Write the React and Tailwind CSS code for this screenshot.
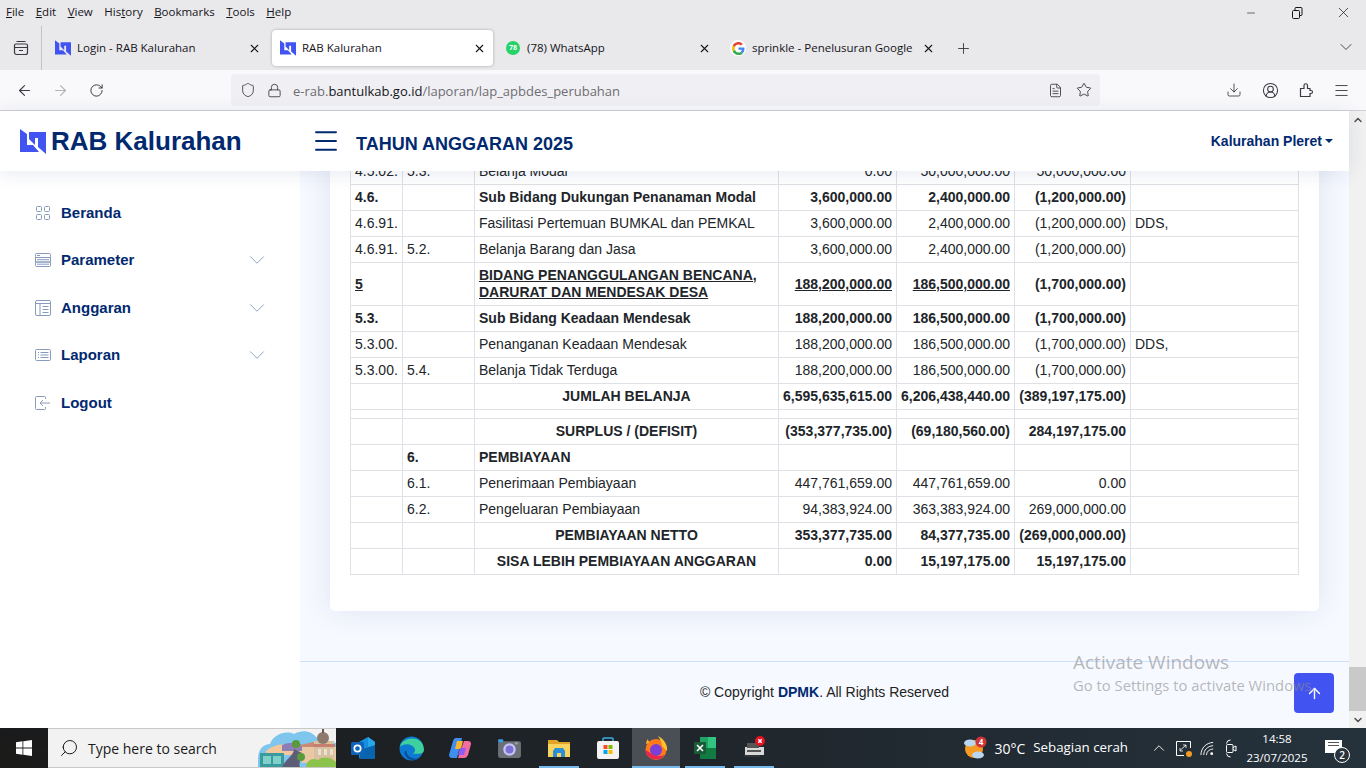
import { ArrowLeft, ArrowRight, RotateCw, Shield, Lock, Star, Download, CircleUserRound, Menu, X, Plus, ChevronDown, ChevronUp, ArrowUp, Minus, Search, FileText } from "lucide-react";

const NAVY = "text-[#012970]";

const rows = [
  { h: "h-[26px]", a: "4.5.02.", b: "5.3.", c: "Belanja Modal", d: "0.00", e: "50,000,000.00", f: "50,000,000.00" },
  { h: "h-[26px]", bold: true, a: "4.6.", c: "Sub Bidang Dukungan Penanaman Modal", d: "3,600,000.00", e: "2,400,000.00", f: "(1,200,000.00)" },
  { h: "h-[26px]", a: "4.6.91.", c: "Fasilitasi Pertemuan BUMKAL dan PEMKAL", d: "3,600,000.00", e: "2,400,000.00", f: "(1,200,000.00)", g: "DDS," },
  { h: "h-[26px]", a: "4.6.91.", b: "5.2.", c: "Belanja Barang dan Jasa", d: "3,600,000.00", e: "2,400,000.00", f: "(1,200,000.00)" },
  { h: "h-[43px]", bold: true, under: true, a: "5", c: "BIDANG PENANGGULANGAN BENCANA, DARURAT DAN MENDESAK DESA", d: "188,200,000.00", e: "186,500,000.00", f: "(1,700,000.00)" },
  { h: "h-[26px]", bold: true, a: "5.3.", c: "Sub Bidang Keadaan Mendesak", d: "188,200,000.00", e: "186,500,000.00", f: "(1,700,000.00)" },
  { h: "h-[26px]", a: "5.3.00.", c: "Penanganan Keadaan Mendesak", d: "188,200,000.00", e: "186,500,000.00", f: "(1,700,000.00)", g: "DDS," },
  { h: "h-[26px]", a: "5.3.00.", b: "5.4.", c: "Belanja Tidak Terduga", d: "188,200,000.00", e: "186,500,000.00", f: "(1,700,000.00)" },
  { h: "h-[26px]", bold: true, center: true, c: "JUMLAH BELANJA", d: "6,595,635,615.00", e: "6,206,438,440.00", f: "(389,197,175.00)" },
  { h: "h-[9px]", c: "" },
  { h: "h-[26px]", bold: true, center: true, c: "SURPLUS / (DEFISIT)", d: "(353,377,735.00)", e: "(69,180,560.00)", f: "284,197,175.00" },
  { h: "h-[26px]", bold: true, b: "6.", c: "PEMBIAYAAN" },
  { h: "h-[26px]", b: "6.1.", c: "Penerimaan Pembiayaan", d: "447,761,659.00", e: "447,761,659.00", f: "0.00" },
  { h: "h-[26px]", b: "6.2.", c: "Pengeluaran Pembiayaan", d: "94,383,924.00", e: "363,383,924.00", f: "269,000,000.00" },
  { h: "h-[26px]", bold: true, center: true, c: "PEMBIAYAAN NETTO", d: "353,377,735.00", e: "84,377,735.00", f: "(269,000,000.00)" },
  { h: "h-[26px]", bold: true, center: true, c: "SISA LEBIH PEMBIAYAAN ANGGARAN", d: "0.00", e: "15,197,175.00", f: "15,197,175.00" },
];

function Logo({ className }) {
  return (
    <svg viewBox="0 0 26 25" className={className}>
      <path fill="#4154f1" d="M0 0L7 5V16H13L19 23H0Z" />
      <path fill="#4154f1" d="M9 3H26V25L18 18V9H15V16L9 10Z" />
    </svg>
  );
}

function GoogleG() {
  return (
    <span className="w-[16px] h-[16px] rounded-full bg-white flex items-center justify-center">
      <svg viewBox="0 0 48 48" className="w-[13px] h-[13px]">
        <path fill="#EA4335" d="M24 9.5c3.5 0 6.6 1.2 9.1 3.6l6.8-6.8C35.8 2.5 30.4 0 24 0 14.6 0 6.5 5.4 2.6 13.2l7.9 6.2C12.4 13.7 17.7 9.5 24 9.5z" />
        <path fill="#4285F4" d="M46.1 24.5c0-1.6-.1-3.1-.4-4.5H24v9h12.4c-.5 2.9-2.2 5.3-4.6 7l7.3 5.6c4.3-4 7-9.9 7-17.1z" />
        <path fill="#FBBC05" d="M10.5 28.6c-.5-1.4-.8-3-.8-4.6s.3-3.2.8-4.6l-7.9-6.2C.9 16.5 0 20.1 0 24s.9 7.5 2.6 10.8l7.9-6.2z" />
        <path fill="#34A853" d="M24 48c6.5 0 11.9-2.1 15.9-5.8l-7.3-5.6c-2.2 1.5-5 2.3-8.6 2.3-6.3 0-11.6-4.2-13.5-9.9l-7.9 6.2C6.5 42.6 14.6 48 24 48z" />
      </svg>
    </span>
  );
}

function Tab({ icon, title, active, width }) {
  return (
    <div className={`flex items-center h-[36px] pl-[8px] pr-[7px] rounded-[4px] ${width} ${active ? "bg-white shadow-[0_0_3px_rgba(0,0,0,0.3)]" : ""}`}>
      <span className="w-[16px] h-[16px] shrink-0 flex items-center justify-center">{icon}</span>
      <span className="ml-[6px] text-[11.5px] text-[#15141a] flex-1 whitespace-nowrap overflow-hidden">{title}</span>
      <X size={13} strokeWidth={2} className="text-[#15141a] shrink-0" />
    </div>
  );
}

function Chrome() {
  const menu = [["F", "ile"], ["E", "dit"], ["V", "iew"], ["His", "tory", "t"], ["B", "ookmarks"], ["T", "ools"], ["H", "elp"]];
  return (
    <div className="bg-[#e9e9ec] font-['Open_Sans',sans-serif] shrink-0">
      <div className="h-[23px] flex items-center pl-[6px] text-[11.5px] text-[#15141a] gap-[11.5px]">
        {menu.map((m) => (
          <span key={m[0] + m[1]} className="whitespace-nowrap">
            {m.length === 3 ? (
              <>His<span className="underline">t</span>ory</>
            ) : (
              <><span className="underline">{m[0]}</span>{m[1]}</>
            )}
          </span>
        ))}
        <div className="ml-auto flex items-center text-[#15141a] mt-[2px]">
          <span className="w-[46px] flex justify-center"><Minus size={12} strokeWidth={1.2} /></span>
          <span className="w-[46px] flex justify-center">
            <svg viewBox="0 0 12 12" className="w-[12px] h-[12px]" fill="none" stroke="currentColor">
              <rect x="1.5" y="3.5" width="7" height="8" rx="1" />
              <path d="M4 3.5V1.5a1 1 0 0 1 1-1h5a1 1 0 0 1 1 1v6a1 1 0 0 1-1 1H8.5" />
            </svg>
          </span>
          <span className="w-[46px] flex justify-center"><X size={17} strokeWidth={1} /></span>
        </div>
      </div>
      <div className="h-[47px] flex items-center">
        <div className="w-[42px] h-[44px] flex items-center justify-center border-r border-[#c4c4c8] mt-[3px]">
          <svg viewBox="0 0 16 16" className="w-[16px] h-[16px] text-[#3a3a40]" fill="none" stroke="currentColor" strokeWidth="1.2">
            <path d="M3.5 1.5h9M1.5 5.5a1.5 1.5 0 0 1 1.5-1.5h10a1.5 1.5 0 0 1 1.5 1.5v7a2 2 0 0 1-2 2h-9a2 2 0 0 1-2-2zM1.5 7.5h13M6 10.5h4" />
          </svg>
        </div>
        <div className="flex items-center mt-[3px] pl-[5px]">
          <Tab width="w-[221px]" title="Login - RAB Kalurahan" icon={<Logo className="w-[16px] h-[16px]" />} />
          <div className="w-[4px]" />
          <Tab active width="w-[221px]" title="RAB Kalurahan" icon={<Logo className="w-[16px] h-[16px]" />} />
          <div className="w-[4px]" />
          <Tab width="w-[221px]" title="(78) WhatsApp" icon={
            <span className="w-[14px] h-[14px] rounded-full bg-[#25d366] text-white text-[7px] font-bold flex items-center justify-center">78</span>
          } />
          <div className="w-[4px]" />
          <Tab width="w-[220px]" title="sprinkle - Penelusuran Google" icon={<GoogleG />} />
          <Plus size={17} strokeWidth={1.3} className="ml-[13px] text-[#3a3a40]" />
        </div>
        <ChevronDown size={20} strokeWidth={1.1} className="ml-auto mr-[10px] text-[#3a3a40]" />
      </div>
      <div className="h-[40px] bg-[#f9f9fb] flex items-center border-b border-[#cfcfd8] box-content">
        <ArrowLeft size={17} strokeWidth={1.6} className="ml-[16px] text-[#3a3a40]" />
        <ArrowRight size={17} strokeWidth={1.6} className="ml-[19px] text-[#b4b4b8]" />
        <RotateCw size={15} strokeWidth={1.6} className="ml-[20px] text-[#3a3a40]" />
        <div className="ml-[127px] w-[869px] h-[32px] rounded-[4px] bg-[#f0f0f4] flex items-center pl-[9px] text-[13px]">
          <Shield size={16} strokeWidth={1.3} className="text-[#3a3a40]" />
          <Lock size={15} strokeWidth={1.4} className="ml-[11px] text-[#3a3a40]" />
          <span className="ml-[11px] mt-[3px] text-[#6d6d72] whitespace-nowrap">e-rab.<span className="text-[#15141a]">bantulkab.go.id</span>/laporan/lap_apbdes_perubahan</span>
          <FileText size={15} strokeWidth={1.4} className="ml-auto text-[#3a3a40]" />
          <Star size={16} strokeWidth={1.4} className="ml-[13px] mr-[8px] text-[#3a3a40]" />
        </div>
        <Download size={16} strokeWidth={1.3} className="ml-[126px] text-[#3a3a40]" />
        <CircleUserRound size={17} strokeWidth={1.5} className="ml-[20px] text-[#3a3a40]" />
        <svg viewBox="0 0 16 16" className="ml-[19px] w-[16px] h-[16px] text-[#3a3a40]" fill="none" stroke="currentColor" strokeWidth="1.2">
          <path d="M2.5 14.5V6.5H6V3.5a1.75 1.75 0 0 1 3.5 0V6.5h2.5v2h1a1.5 1.5 0 0 1 0 3h-1v3z" />
        </svg>
        <Menu size={17} strokeWidth={1.3} className="ml-[19px] text-[#3a3a40]" />
      </div>
    </div>
  );
}

function SiteHeader() {
  return (
    <div className="h-[60px] bg-white flex items-center shrink-0 relative z-10 shadow-[0_2px_20px_rgba(1,41,112,0.1)] font-['Liberation_Sans',sans-serif]">
      <div className="w-[311px] flex items-center pl-[20px]">
        <Logo className="w-[26px] h-[25px]" />
        <span className={`ml-[5px] text-[26px] font-bold ${NAVY} whitespace-nowrap`}>RAB Kalurahan</span>
      </div>
      <Menu size={30} strokeWidth={1.5} className={NAVY} />
      <span className={`ml-[15px] text-[18px] font-bold ${NAVY} whitespace-nowrap mt-[6px]`}>TAHUN ANGGARAN 2025</span>
      <div className={`ml-auto mr-[16px] text-[14px] font-bold ${NAVY} flex items-center whitespace-nowrap`}>
        Kalurahan Pleret
        <span className="ml-[3px] -mt-[1px] border-x-[4px] border-x-transparent border-t-[4px] border-t-[#012970]" />
      </div>
    </div>
  );
}

function SideIcon({ name }) {
  const cls = "w-[16px] h-[16px] text-[#899bbd]";
  if (name === "grid") return (
    <svg viewBox="0 0 16 16" className={cls} fill="none" stroke="currentColor" strokeWidth="1">
      <rect x="1.5" y="1.5" width="5" height="5" rx="1" /><rect x="9.5" y="1.5" width="5" height="5" rx="1" /><rect x="1.5" y="9.5" width="5" height="5" rx="1" /><rect x="9.5" y="9.5" width="5" height="5" rx="1" />
    </svg>
  );
  if (name === "param") return (
    <svg viewBox="0 0 16 16" className={cls} fill="none" stroke="currentColor" strokeWidth="1">
      <rect x="0.5" y="1.5" width="15" height="4" rx="1" /><rect x="0.5" y="5.5" width="15" height="4.5" /><rect x="0.5" y="10" width="15" height="4.5" rx="1" /><path d="M2 3.5h3M2 7.7h12M2 12.2h12" />
    </svg>
  );
  if (name === "ang") return (
    <svg viewBox="0 0 16 16" className={cls} fill="none" stroke="currentColor" strokeWidth="1">
      <rect x="0.5" y="0.5" width="15" height="15" rx="1.5" /><path d="M0.5 3.5h15M5 3.5v12M7.5 6.5h6M7.5 9.5h6M7.5 12.5h6" />
    </svg>
  );
  if (name === "lap") return (
    <svg viewBox="0 0 16 16" className={cls} fill="none" stroke="currentColor" strokeWidth="1">
      <rect x="0.5" y="2.5" width="15" height="11" rx="1" /><path d="M3 5.5h1M5.5 5.5h8M3 8h1M5.5 8h8M3 10.5h1M5.5 10.5h8" />
    </svg>
  );
  return (
    <svg viewBox="0 0 16 16" className={cls} fill="none" stroke="currentColor" strokeWidth="1">
      <path d="M10.5 4V2.5a1 1 0 0 0-1-1h-8a1 1 0 0 0-1 1v11a1 1 0 0 0 1 1h8a1 1 0 0 0 1-1V12M15 8H5M8 5L5 8l3 3" />
    </svg>
  );
}

function Sidebar() {
  const items = [
    ["grid", "Beranda", false],
    ["param", "Parameter", true],
    ["ang", "Anggaran", true],
    ["lap", "Laporan", true],
    ["out", "Logout", false],
  ];
  return (
    <aside className="w-[300px] shrink-0 bg-white pt-[18px] shadow-[0_0_20px_rgba(1,41,112,0.1)] relative font-['Liberation_Sans',sans-serif]">
      {items.map(([icon, label, chevron]) => (
        <div key={label} className="h-[47.5px] flex items-center pl-[35px] pr-[30px]">
          <SideIcon name={icon} />
          <span className={`ml-[10px] text-[15px] font-bold ${NAVY}`}>{label}</span>
          {chevron && <ChevronDown size={26} strokeWidth={0.8} className="ml-auto text-[#7f93bb]" />}
        </div>
      ))}
    </aside>
  );
}

function Cell({ className = "", children }) {
  return <td className={`border border-[#dee2e6] px-[4px] align-middle ${className}`}>{children}</td>;
}

function Table() {
  return (
    <table className="w-[948px] table-fixed border-collapse text-[14px] leading-[17px] text-[#212529] font-['Liberation_Sans',sans-serif]">
      <colgroup>
        <col className="w-[52px]" /><col className="w-[72px]" /><col className="w-[304px]" /><col className="w-[118px]" /><col className="w-[118px]" /><col className="w-[116px]" /><col className="w-[168px]" />
      </colgroup>
      <tbody>
        {rows.map((r, i) => {
          const t = r.bold ? "font-bold" : "";
          const u = r.under ? "underline" : "";
          return (
            <tr key={i} className={r.h}>
              <Cell className={`${t} ${u} whitespace-nowrap`}>{r.a}</Cell>
              <Cell className={`${t} whitespace-nowrap`}>{r.b}</Cell>
              <Cell className={`${t} ${u} ${r.center ? "text-center" : ""}`}>{r.c}</Cell>
              <Cell className={`${t} ${u} text-right whitespace-nowrap`}>{r.d}</Cell>
              <Cell className={`${t} ${u} text-right whitespace-nowrap`}>{r.e}</Cell>
              <Cell className={`${t} text-right whitespace-nowrap`}>{r.f}</Cell>
              <Cell>{r.g}</Cell>
            </tr>
          );
        })}
      </tbody>
    </table>
  );
}

function Main() {
  return (
    <main className="flex-1 flex flex-col bg-[#f6f9ff] overflow-hidden relative">
      <div className="flex-1 min-h-0">
        <div className="ml-[30px] mr-[30px] -mt-[13px] pl-[20px] bg-white rounded-b-[5px] shadow-[0_0_30px_rgba(1,41,112,0.1)] h-[453px]">
          <Table />
        </div>
      </div>
      <footer className="h-[67px] border-t border-[#cddfff] text-center pt-[20px] text-[14px] text-[#222222] font-['Liberation_Sans',sans-serif]">
        © Copyright <b className={NAVY}>DPMK</b>. All Rights Reserved
      </footer>
      <div className="absolute left-[994px] top-[502px] w-[40px] h-[40px] rounded-[4px] bg-[#4154f1] flex items-center justify-center">
        <ArrowUp size={17} strokeWidth={2} className="text-white mt-[1px]" />
      </div>
      <div className="absolute left-[773px] top-[478px] text-[#8a8a8a]/60 font-['Open_Sans',sans-serif] pointer-events-none whitespace-nowrap">
        <div className="text-[19px] leading-[26px]">Activate Windows</div>
        <div className="text-[14.8px] leading-[20px]">Go to Settings to activate Windows.</div>
      </div>
    </main>
  );
}

function Scrollbar() {
  return (
    <div className="w-[17px] shrink-0 bg-[#f1f1f1] flex flex-col">
      <div className="h-[17px] flex items-center justify-center">
        <ChevronUp size={12} strokeWidth={3} className="text-[#505050]" />
      </div>
      <div className="flex-1" />
      <div className="h-[44px] bg-[#c9c9c9]" />
      <div className="h-[17px] flex items-center justify-center">
        <ChevronDown size={12} strokeWidth={3} className="text-[#505050]" />
      </div>
    </div>
  );
}

function TaskIcon({ children, active, running, width = "w-[48px]", bar = "w-[40px]" }) {
  return (
    <div className={`${width} h-[40px] flex items-center justify-center relative ${active ? "bg-[#4a4f55]" : ""}`}>
      {children}
      {running && <div className={`absolute bottom-0 left-1/2 -translate-x-1/2 h-[2px] bg-[#76b9ed] ${bar}`} />}
    </div>
  );
}

function SearchArt() {
  return (
    <svg viewBox="0 0 78 38" className="absolute right-0 top-0 w-[78px] h-[38px]">
      <path fill="#7fc6ee" d="M0 30C0 20 6 15 12 15 15 6 27 1 36 5 44 0 54 2 58 8L78 14V38H0Z" />
      <path fill="#f1c79b" d="M8 22C18 14 30 14 40 18L48 26H8Z" />
      <path fill="#8c7fb5" d="M24 16C32 13 40 13 46 17V22H24Z" />
      <path fill="#e9c8a4" d="M44 18H78V34H44Z" />
      <path fill="#c98975" d="M42 16L60 12 68 18H44Z" />
      <path fill="#d9c0a0" d="M56 12H76V30H56Z" />
      <path fill="#c97f70" d="M55 15H77V18H55Z" />
      <path fill="#e8e0d0" d="M60 20h3v6h-3zM66 20h3v6h-3zM72 20h3v6h-3z" />
      <ellipse cx="65" cy="9" rx="6" ry="6" fill="#8d7a6c" />
      <path fill="#6b5a50" d="M64 0h2v4h-2z" />
      <path fill="#3a9a9e" d="M2 24H26V38H2Z" />
      <path fill="#7ed0c8" d="M5 27h8v8H5zM15 27h8v8h-8z" />
      <path fill="#5d5d78" d="M24 38C28 30 36 26 36 20L44 24C44 30 40 34 42 38Z" />
      <circle cx="38" cy="15" r="4" fill="#5b9a3a" />
      <circle cx="43" cy="28" r="4" fill="#5b9a3a" />
      <path fill="#8cc34a" d="M48 38C48 32 54 28 60 31 64 27 74 28 78 33V38Z" />
    </svg>
  );
}

function Taskbar() {
  return (
    <div className="h-[40px] bg-linear-to-r from-[#1b1b1a] via-[#1f252b] to-[#25323c] flex items-center shrink-0 text-white font-['Open_Sans',sans-serif]">
      <div className="w-[48px] h-[40px] flex items-center justify-center">
        <svg viewBox="0 0 16 16" className="w-[16px] h-[16px]" fill="white">
          <path d="M0 2.2l6.5-.9v6.3H0zM7.3 1.2L16 0v7.6H7.3zM0 8.4h6.5v6.3L0 13.8zM7.3 8.4H16V16l-8.7-1.2z" />
        </svg>
      </div>
      <div className="w-[288px] h-[40px] bg-[#f2f2f2] border-y border-[#c8c8c8] flex items-center relative overflow-hidden text-[#1a1a1a]">
        <Search size={20} strokeWidth={1.2} className="ml-[11px] -scale-x-100" />
        <span className="ml-[9px] text-[14px]">Type here to search</span>
        <SearchArt />
      </div>
      <div className="flex items-center pl-[3px]">
        <TaskIcon>
          <svg viewBox="0 0 24 24" className="w-[24px] h-[24px]">
            <path fill="#1490df" d="M8 6l9-5 7 5v15a2 2 0 0 1-2 2H10a2 2 0 0 1-2-2z" /><path fill="#28a8ea" d="M17 1l7 5v6h-7z" /><path fill="#0a64ad" d="M9 14l15-5v12a2 2 0 0 1-2 2H9z" />
            <rect x="0" y="6" width="13" height="13" rx="1.5" fill="#0f62ba" />
            <circle cx="6.5" cy="12.5" r="3.2" fill="none" stroke="white" strokeWidth="1.7" />
          </svg>
        </TaskIcon>
        <TaskIcon>
          <svg viewBox="0 0 24 24" className="w-[25px] h-[25px]">
            <circle cx="12" cy="12" r="11.5" fill="#0c7bd1" />
            <path fill="#3fd0a0" d="M1 10C3 1 23-2 24 13c0 3-2 4-5 4h-6c2-1 3-3 2-5-2-4-8-6-14-2z" />
            <path fill="#0a4d9a" d="M7 14c0 5 5 9 12 7-5 4-13 2-14-6z" />
          </svg>
        </TaskIcon>
        <TaskIcon width="w-[49px]">
          <svg viewBox="0 0 24 24" className="w-[24px] h-[24px]">
            <path fill="#3f8ff0" d="M8 2h6l-5 20H4c-2 0-3-2-3-3l4-14c.5-2 2-3 3-3z" />
            <path fill="#f36ea0" d="M10 22h6c2 0 3-1 4-3l3-11c0-2-1-3-3-3h-4z" />
            <path fill="#f7b733" d="M9 5h6l-2 8H7z" />
            <path fill="#8f5cf0" d="M12 12h6l-2 7h-6z" />
          </svg>
        </TaskIcon>
        <TaskIcon width="w-[50px]">
          <svg viewBox="0 0 24 24" className="w-[25px] h-[25px]">
            <rect x="1" y="5" width="22" height="16" rx="2" fill="#6b7078" />
            <rect x="1" y="3" width="5" height="3" rx="1" fill="#38a0e0" />
            <rect x="17" y="6" width="3" height="2" fill="#9a9ea5" />
            <circle cx="12" cy="13" r="6" fill="#c9c2f0" /><circle cx="12" cy="13" r="3.8" fill="#7b6fd8" />
          </svg>
        </TaskIcon>
        <TaskIcon running width="w-[49px]">
          <svg viewBox="0 0 24 24" className="w-[24px] h-[24px]">
            <path fill="#e0a526" d="M1 4h9l2 2h11v5H1z" /><path fill="#f8d35e" d="M1 8h22v13H1z" />
            <path fill="#2a8fd8" d="M6 21v-6l2-3h8l2 3v6h-4v-4h-4v4z" />
          </svg>
        </TaskIcon>
        <TaskIcon width="w-[49px]">
          <svg viewBox="0 0 24 24" className="w-[24px] h-[24px]">
            <path fill="none" stroke="#38b0e8" strokeWidth="1.5" d="M7 7V3a1 1 0 0 1 1-1h8a1 1 0 0 1 1 1v4" />
            <rect x="1" y="5" width="22" height="18" rx="2" fill="#f3f3f3" />
            <rect x="7.5" y="9" width="4" height="4" fill="#f25022" /><rect x="12.5" y="9" width="4" height="4" fill="#7fba00" />
            <rect x="7.5" y="14" width="4" height="4" fill="#00a4ef" /><rect x="12.5" y="14" width="4" height="4" fill="#ffb900" />
          </svg>
        </TaskIcon>
        <TaskIcon active running bar="w-[48px]">
          <svg viewBox="0 0 24 24" className="w-[24px] h-[24px]">
            <circle cx="12" cy="13.5" r="10.5" fill="#ff7a1a" />
            <path fill="#ffc02e" d="M14 0c6 3 10 9 9 15l-5-5c0-4-2-7-4-10z" />
            <path fill="#ffb02e" d="M2 8c0-2 1-4 2-5 0 2 1 3 2 3-2 1-3 2-4 2z" />
            <circle cx="12" cy="14" r="6" fill="#7a3fd8" />
            <path fill="#e8264e" d="M1.5 14c-.5 5 5 9.5 10.5 9.5 4 0 7-2 9-5-3 2-8 2-10 1-3-1-5-3-9.5-5.5z" />
          </svg>
        </TaskIcon>
        <TaskIcon running width="w-[50px]">
          <svg viewBox="0 0 24 24" className="w-[24px] h-[24px]">
            <path fill="#21a366" d="M7 1h16v22H7z" /><path fill="#107c41" d="M7 12h16v11H7z" /><path fill="#33c481" d="M15 1h8v11h-8z" />
            <rect x="1" y="6" width="12" height="12" fill="#185c37" />
            <path stroke="white" strokeWidth="1.6" d="M4 9l6 6M10 9l-6 6" />
          </svg>
        </TaskIcon>
        <TaskIcon running>
          <svg viewBox="0 0 24 24" className="w-[24px] h-[24px]">
            <path fill="#d8d8d8" d="M3 11h19v8H3z" /><path fill="#555" d="M5 7h12v5H5zM5 14h14v2H5z" /><path fill="#333" d="M2 19h16v2H2z" />
            <circle cx="18" cy="5" r="5" fill="#e81123" />
            <path stroke="white" strokeWidth="1.5" d="M16.3 3.3l3.4 3.4M19.7 3.3l-3.4 3.4" />
          </svg>
        </TaskIcon>
      </div>
      <div className="ml-auto flex items-center text-[13.3px] whitespace-nowrap">
        <svg viewBox="0 0 24 24" className="w-[24px] h-[24px]">
          <circle cx="11" cy="13" r="9" fill="#f59a23" />
          <ellipse cx="7" cy="7" rx="6" ry="3.5" fill="#b9d5ef" />
          <ellipse cx="15" cy="19" rx="6" ry="3.5" fill="#b9d5ef" />
          <circle cx="18" cy="6" r="5.5" fill="#d13438" />
          <text x="18" y="9" fontSize="8" fontWeight="700" textAnchor="middle" fill="white">4</text>
        </svg>
        <span className="ml-[8px] text-[14px]">30°C</span>
        <span className="ml-[8px]">Sebagian cerah</span>
        <ChevronUp size={18} strokeWidth={1.2} className="ml-[22px]" />
        <svg viewBox="0 0 17 17" className="ml-[7px] w-[17px] h-[17px]" fill="none" stroke="white">
          <path d="M15.5 8V1.5H1.5V15.5H9" />
          <path d="M5 10.5L11 5M8 5h3v3M5 8v3h3" strokeWidth="0.8" />
          <circle cx="14" cy="14" r="3" fill="#f59a23" stroke="none" />
        </svg>
        <svg viewBox="0 0 16 16" className="ml-[8px] w-[15px] h-[15px]" fill="none" stroke="white" strokeWidth="1">
          <path d="M1 15C1 7.5 6.5 2 14 1.5M4 15C4 9.5 8 5.5 14 5M7 15C7 11.5 9.5 9 14 8.5" />
          <circle cx="12.5" cy="13.5" r="1.5" fill="white" stroke="none" />
        </svg>
        <svg viewBox="0 0 12 19" className="ml-[10px] w-[12px] h-[19px]" fill="none" stroke="white">
          <path d="M1.5 4.5A4 4 0 0 1 5.5 1M1.5 14.5A4 4 0 0 0 5.5 18" />
          <rect x="1.5" y="5.5" width="6.5" height="8" rx="1" />
          <path d="M8 8.5l3-1.500v5l-3-1.500" />
        </svg>
        <div className="ml-[5px] w-[70px] text-center text-[11.5px] leading-[19px]">
          <div>14:58</div>
          <div>23/07/2025</div>
        </div>
        <div className="ml-[13px] mr-[24px] relative w-[17px] h-[13px] bg-white flex flex-col gap-[2px] px-[3px] pt-[2px] -mt-[3px]">
          <span className="h-px bg-[#555555]" />
          <span className="h-px bg-[#555555]" />
          <span className="absolute -right-[8px] -bottom-[10px] w-[16px] h-[16px] rounded-full bg-[#2a343c] border border-white text-[10px] leading-[14px] text-center font-semibold">2</span>
        </div>
      </div>
    </div>
  );
}

export default function App() {
  return (
    <div className="w-[1366px] h-[768px] flex flex-col overflow-hidden">
      <Chrome />
      <div className="flex-1 min-h-0 flex">
        <div className="flex-1 min-w-0 flex flex-col">
          <SiteHeader />
          <div className="flex-1 min-h-0 flex">
            <Sidebar />
            <Main />
          </div>
        </div>
        <Scrollbar />
      </div>
      <Taskbar />
    </div>
  );
}
